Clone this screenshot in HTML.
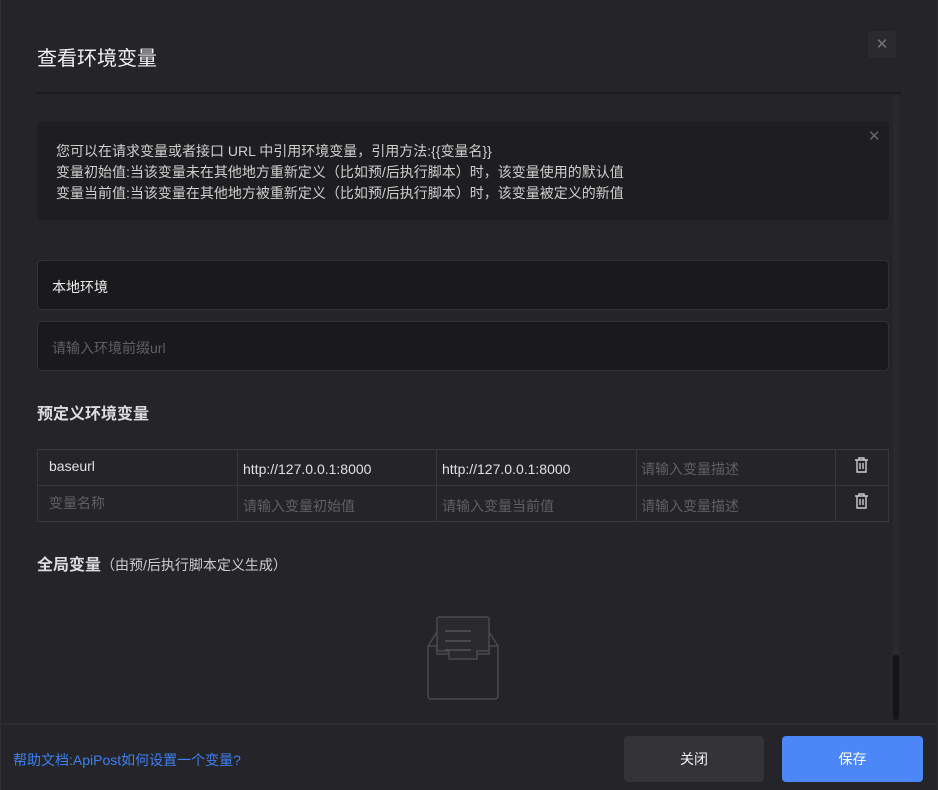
<!DOCTYPE html>
<html><head><meta charset="utf-8"><style>
*{margin:0;padding:0;box-sizing:border-box}
body{width:938px;height:790px;background:#252529;font-family:"Liberation Sans","Noto Sans CJK SC",sans-serif;position:relative;overflow:hidden;color:#ddd}
.a{position:absolute}
.t{font-size:14px;white-space:nowrap}
.cell{position:absolute;font-size:14px;line-height:36px;padding-left:12px;color:#e0e0e0;white-space:nowrap}
.ph{color:#5f5f64}
</style></head><body>
<div class="a" style="left:0;top:0;width:938px;height:790px;border-left:1px solid #2e2e32;border-right:1px solid #2e2e32"></div>
<div class="a" style="left:37px;top:42px;font-size:20px;color:#f2f2f2">查看环境变量</div>
<div class="a" style="left:868px;top:31px;width:28px;height:27px;background:#2b2b2f;border-radius:3px;color:#777;font-size:15px;text-align:center;line-height:27px">✕</div>
<div class="a" style="left:37px;top:92px;width:864px;height:2px;background:#1b1b1e"></div>
<div class="a" style="left:893px;top:95px;width:6px;height:625px;background:#2a2a2e;border-radius:3px"></div>
<div class="a" style="left:893px;top:655px;width:6px;height:65px;background:#151517;border-radius:3px"></div>
<div class="a" style="left:37px;top:122px;width:852px;height:98px;background:#1e1e21;border-radius:3px"></div>
<div class="a" style="left:868px;top:127px;color:#666;font-size:15px">✕</div>
<div class="a t" style="left:56px;top:141px;line-height:21px;color:#cfcfcf">您可以在请求变量或者接口 URL 中引用环境变量，引用方法:{{变量名}}<br>变量初始值:当该变量未在其他地方重新定义（比如预/后执行脚本）时，该变量使用的默认值<br>变量当前值:当该变量在其他地方被重新定义（比如预/后执行脚本）时，该变量被定义的新值</div>
<div class="a" style="left:37px;top:260px;width:852px;height:50px;background:#1a1a1d;border:1px solid #323236;border-radius:4px"></div>
<div class="a t" style="left:52px;top:277px;color:#eee">本地环境</div>
<div class="a" style="left:37px;top:321px;width:852px;height:50px;background:#1a1a1d;border:1px solid #323236;border-radius:4px"></div>
<div class="a t" style="left:52px;top:338px;color:#5f5f64">请输入环境前缀url</div>
<div class="a" style="left:37px;top:400px;font-size:16px;font-weight:bold;color:#ddd">预定义环境变量</div>
<div class="a" style="left:37px;top:449px;width:852px;height:73px;border:1px solid #38383c"></div>
<div class="a" style="left:37px;top:485px;width:852px;height:1px;background:#38383c"></div>
<div class="a" style="left:237px;top:449px;width:1px;height:73px;background:#38383c"></div>
<div class="a" style="left:436px;top:449px;width:1px;height:73px;background:#38383c"></div>
<div class="a" style="left:636px;top:449px;width:1px;height:73px;background:#38383c"></div>
<div class="a" style="left:835px;top:449px;width:1px;height:73px;background:#38383c"></div>
<div class="cell" style="left:37px;top:448px">baseurl</div>
<div class="cell" style="left:231px;top:451px">http://127.0.0.1:8000</div>
<div class="cell" style="left:430px;top:451px">http://127.0.0.1:8000</div>
<div class="cell ph" style="left:629px;top:451px">请输入变量描述</div>
<div class="cell ph" style="left:37px;top:485px">变量名称</div>
<div class="cell ph" style="left:231px;top:488px">请输入变量初始值</div>
<div class="cell ph" style="left:430px;top:488px">请输入变量当前值</div>
<div class="cell ph" style="left:629px;top:488px">请输入变量描述</div>
<svg class="a" style="left:854px;top:457px" width="15" height="16" viewBox="0 0 15 16" fill="none" stroke="#ccc" stroke-width="1.4"><path d="M1 3h13M5 3V1h5v2M3 3v12h9V3M6 6v6M9 6v6"/></svg>
<svg class="a" style="left:854px;top:493px" width="15" height="16" viewBox="0 0 15 16" fill="none" stroke="#ccc" stroke-width="1.4"><path d="M1 3h13M5 3V1h5v2M3 3v12h9V3M6 6v6M9 6v6"/></svg>
<div class="a" style="left:37px;top:551px;font-size:16px;font-weight:bold;color:#ddd">全局变量<span style="font-weight:normal;font-size:14px;color:#ccc">（由预/后执行脚本定义生成）</span></div>
<svg class="a" style="left:425px;top:616px" width="76" height="86" viewBox="0 0 76 86" fill="none" stroke="#4a4a4f" stroke-width="1.5"><path d="M3 30v50a3 3 0 0 0 3 3h64a3 3 0 0 0 3-3V30L64 16H12L3 30z" fill="#252529"/><path d="M12 3a2 2 0 0 1 2-2h48a2 2 0 0 1 2 2v32H52v8H24v-8H12z" fill="#2a2a2e"/><path d="M3 30h9v8h12M73 30h-9v8H52"/><path d="M20 15h26M20 25h26M20 34h26" stroke="#555"/></svg>
<div class="a" style="left:0;top:723px;width:938px;height:2px;background:#2e2e32"></div>
<div class="a t" style="left:13px;top:750px;color:#3e7ff2">帮助文档:ApiPost如何设置一个变量?</div>
<div class="a" style="left:624px;top:736px;width:140px;height:46px;background:#333338;border-radius:4px;color:#f2f2f2;font-size:14px;text-align:center;line-height:46px">关闭</div>
<div class="a" style="left:782px;top:736px;width:141px;height:46px;background:#4b87f7;border-radius:4px;color:#fff;font-size:14px;text-align:center;line-height:46px">保存</div>
</body></html>
